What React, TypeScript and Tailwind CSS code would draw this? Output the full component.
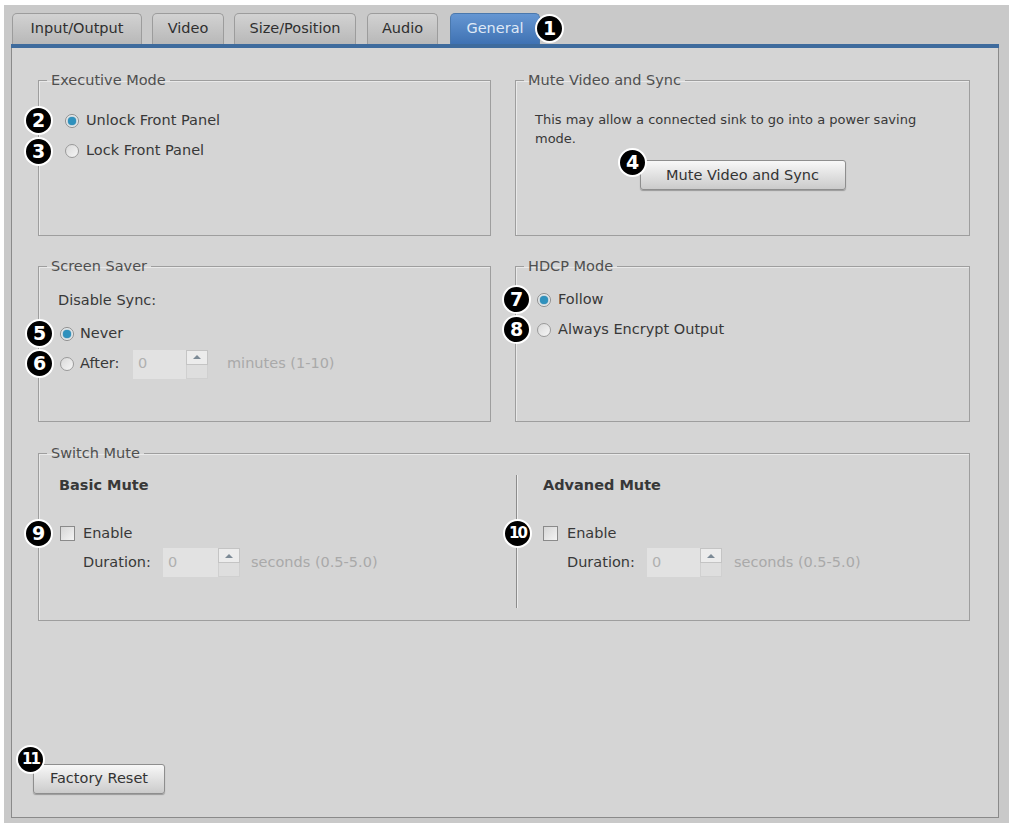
import React from 'react';

const Badge: React.FC<{ n: string; className: string }> = ({ n, className }) => (
    <div
        className={`absolute w-[29px] h-[29px] rounded-full bg-black border-2 border-white flex items-center justify-center text-white font-bold leading-none ${className}`}
    >
        {n}
    </div>
);

const Radio: React.FC<{ checked?: boolean }> = ({ checked }) =>
    checked ? (
        <span className="w-[14px] h-[14px] rounded-full border border-[#8d8d8d] bg-[#f4f4f4] flex items-center justify-center shrink-0">
            <span className="w-[8px] h-[8px] rounded-full bg-[#2f91bd] shadow-[0_0_2px_#1b6b90]" />
        </span>
    ) : (
        <span className="w-[14px] h-[14px] rounded-full border border-[#9a9a9a] bg-gradient-to-br from-[#d9d9d9] to-[#f6f6f6] shrink-0" />
    );

const Checkbox = () => (
    <span className="w-[15px] h-[15px] border border-[#8a8a8a] bg-gradient-to-br from-[#d6d6d6] to-[#f4f4f4] shrink-0" />
);

const Spinner: React.FC<{ w: string }> = ({ w }) => (
    <div className="flex h-[29px]">
        <div className={`${w} h-full bg-[#e2e2e2] text-[#b0b0b0] pl-[5px] flex items-center`}>0</div>
        <div className="w-[22px] h-full flex flex-col">
            <div className="h-[15px] bg-[#ececec] border border-[#c4c4c4] flex items-center justify-center">
                <span className="w-0 h-0 border-x-[4px] border-x-transparent border-b-[4px] border-b-[#7c8a96]" />
            </div>
            <div className="flex-1 bg-[#dedede] border-x border-b border-[#d0d0d0]" />
        </div>
    </div>
);

const Legend: React.FC<{ children: React.ReactNode }> = ({ children }) => (
    <legend className="ml-[8px] px-[4px] leading-[16px] text-[#4f4f4f]">{children}</legend>
);

const fieldsetCls = 'border border-[#9e9e9e] shadow-[inset_1px_1px_0_#e9e9e9] m-0 p-0 min-w-0';
const tabCls = 'h-full rounded-t-[5px] border border-b-0 flex items-center justify-center';

export default function App() {
    return (
        <div className="relative w-[1009px] h-[823px] bg-white pt-[5px] pl-[4px] font-['DejaVu_Sans',sans-serif] text-[14.5px] text-[#383838]">
            <div className="w-[1005px] h-[818px] bg-[#c9c9c9] pl-[7px] pt-[8px]">
                {/* Tabs */}
                <div className="flex items-end h-[31px] pl-[1px] text-[#2f2f2f]">
                    <div className={`${tabCls} w-[130px] border-[#9c9c9c] bg-gradient-to-b from-[#d2d2d2] to-[#b8b8b8]`}>Input/Output</div>
                    <div className={`${tabCls} w-[72px] ml-[10px] border-[#9c9c9c] bg-gradient-to-b from-[#d2d2d2] to-[#b8b8b8]`}>Video</div>
                    <div className={`${tabCls} w-[122px] ml-[10px] border-[#9c9c9c] bg-gradient-to-b from-[#d2d2d2] to-[#b8b8b8]`}>Size/Position</div>
                    <div className={`${tabCls} w-[71px] ml-[11px] border-[#9c9c9c] bg-gradient-to-b from-[#d2d2d2] to-[#b8b8b8]`}>Audio</div>
                    <div className={`${tabCls} w-[90px] ml-[12px] border-[#4a78ad] bg-gradient-to-b from-[#6596d2] to-[#3f72b3] text-[#dfe9f6]`}>General</div>
                </div>
                <div className="w-[988px] h-[4px] bg-[#3e6b9d]" />

                {/* Panel */}
                <div className="w-[988px] h-[770px] bg-[#d5d5d5] border-x border-b border-[#8a8a8a] flex flex-col pt-[24px] px-[26px]">
                    <div className="grid grid-cols-[453px_455px] gap-x-[24px] gap-y-[22px]">
                        <fieldset className={`${fieldsetCls} h-[164px]`}>
                            <Legend>Executive Mode</Legend>
                            <div className="pt-[18px] pl-[26px]">
                                <div className="h-[30px] flex items-center gap-[7px]">
                                    <Radio checked />
                                    <span>Unlock Front Panel</span>
                                </div>
                                <div className="h-[30px] flex items-center gap-[7px]">
                                    <Radio />
                                    <span>Lock Front Panel</span>
                                </div>
                            </div>
                        </fieldset>

                        <fieldset className={`${fieldsetCls} h-[164px]`}>
                            <Legend>Mute Video and Sync</Legend>
                            <div className="pt-[22px] px-[19px] leading-[19px]">
                                <p className="text-[13px] pr-[20px]">This may allow a connected sink to go into a power saving mode.</p>
                                <div className="flex justify-center mt-[12px]">
                                    <button className="w-[206px] h-[30px] border border-[#8e8e8e] rounded-[3px] bg-gradient-to-b from-[#f8f8f8] to-[#cbcbcb] text-[#333] shadow-[0_1px_1px_#9a9a9a]">
                                        Mute Video and Sync
                                    </button>
                                </div>
                            </div>
                        </fieldset>

                        <fieldset className={`${fieldsetCls} h-[164px]`}>
                            <Legend>Screen Saver</Legend>
                            <div className="pt-[16px]">
                                <div className="h-[22px] flex items-center pl-[19px]">Disable Sync:</div>
                                <div className="mt-[7px] pl-[21px]">
                                    <div className="h-[30px] flex items-center gap-[6px]">
                                        <Radio checked />
                                        <span>Never</span>
                                    </div>
                                    <div className="h-[30px] flex items-center gap-[6px]">
                                        <Radio />
                                        <span className="w-[47px]">After:</span>
                                        <Spinner w="w-[53px]" />
                                        <span className="ml-[13px] text-[#a9a9a9]">minutes (1-10)</span>
                                    </div>
                                </div>
                            </div>
                        </fieldset>

                        <fieldset className={`${fieldsetCls} h-[164px]`}>
                            <Legend>HDCP Mode</Legend>
                            <div className="pt-[11px] pl-[21px]">
                                <div className="h-[30px] flex items-center gap-[7px]">
                                    <Radio checked />
                                    <span>Follow</span>
                                </div>
                                <div className="h-[30px] flex items-center gap-[7px]">
                                    <Radio />
                                    <span>Always Encrypt Output</span>
                                </div>
                            </div>
                        </fieldset>

                        <fieldset className={`${fieldsetCls} h-[176px] col-span-2 mt-[1px]`}>
                            <Legend>Switch Mute</Legend>
                            <div className="flex">
                                <div className="w-[477px] pt-[15px]">
                                    <div className="h-[20px] flex items-center pl-[20px] font-bold">Basic Mute</div>
                                    <div className="mt-[23px] h-[29px] flex items-center gap-[8px] pl-[21px]">
                                        <Checkbox />
                                        <span>Enable</span>
                                    </div>
                                    <div className="h-[29px] flex items-center pl-[44px]">
                                        <span className="w-[80px]">Duration:</span>
                                        <Spinner w="w-[55px]" />
                                        <span className="ml-[11px] text-[#a9a9a9]">seconds (0.5-5.0)</span>
                                    </div>
                                </div>
                                <div className="w-px h-[133px] mt-[14px] bg-[#8c8c8c] shadow-[1px_0_0_#ececec]" />
                                <div className="flex-1 pt-[15px]">
                                    <div className="h-[20px] flex items-center pl-[26px] font-bold">Advaned Mute</div>
                                    <div className="mt-[23px] h-[29px] flex items-center gap-[9px] pl-[26px]">
                                        <Checkbox />
                                        <span>Enable</span>
                                    </div>
                                    <div className="h-[29px] flex items-center pl-[50px]">
                                        <span className="w-[80px]">Duration:</span>
                                        <Spinner w="w-[53px]" />
                                        <span className="ml-[12px] text-[#a9a9a9]">seconds (0.5-5.0)</span>
                                    </div>
                                </div>
                            </div>
                        </fieldset>
                    </div>

                    <button className="self-start mt-auto mb-[23px] -ml-[5px] w-[132px] h-[30px] border border-[#8e8e8e] rounded-[3px] bg-gradient-to-b from-[#f8f8f8] to-[#cbcbcb] text-[#333] shadow-[0_1px_1px_#9a9a9a]">
                        Factory Reset
                    </button>
                </div>
            </div>

            {/* Callout badges */}
            <Badge n="1" className="left-[535px] top-[14px] text-[19px]" />
            <Badge n="2" className="left-[24px] top-[106px] text-[19px]" />
            <Badge n="3" className="left-[24px] top-[137px] text-[19px]" />
            <Badge n="4" className="left-[618px] top-[148px] text-[19px]" />
            <Badge n="5" className="left-[25px] top-[319px] text-[19px]" />
            <Badge n="6" className="left-[25px] top-[349px] text-[19px]" />
            <Badge n="7" className="left-[502px] top-[285px] text-[19px]" />
            <Badge n="8" className="left-[502px] top-[315px] text-[19px]" />
            <Badge n="9" className="left-[24px] top-[519px] text-[19px]" />
            <Badge n="10" className="left-[503px] top-[519px] text-[15px] tracking-[-2px]" />
            <Badge n="11" className="left-[16px] top-[745px] text-[15px] tracking-[-2px]" />
        </div>
    );
}
